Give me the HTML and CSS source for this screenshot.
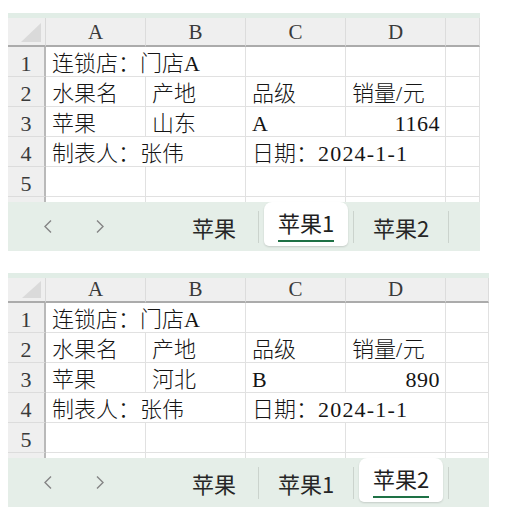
FILE: index.html
```html
<!DOCTYPE html>
<html lang="zh-CN">
<head>
<meta charset="utf-8">
<title>Sheets</title>
<link rel="stylesheet" href="styles.css">
</head>
<body>
<div class="sheet sheet-a">
  <div class="strip"></div>
  <div class="grid">
    <div class="corner"><span class="tri"></span></div>
    <div class="ch">A</div><div class="ch">B</div><div class="ch">C</div><div class="ch">D</div><div class="ch"></div>

    <div class="rh">1</div><div class="c span2">连锁店：门店<span class="lat">A</span></div><div class="c"></div><div class="c"></div><div class="c"></div>
    <div class="rh">2</div><div class="c">水果名</div><div class="c">产地</div><div class="c">品级</div><div class="c">销量<span class="lat">/</span>元</div><div class="c"></div>
    <div class="rh">3</div><div class="c">苹果</div><div class="c">山东</div><div class="c"><span class="lat">A</span></div><div class="c num"><span class="lat">1164</span></div><div class="c"></div>
    <div class="rh">4</div><div class="c span2">制表人：张伟</div><div class="c span2">日期：<span class="lat date">2024-1-1</span></div><div class="c"></div>
    <div class="rh">5</div><div class="c"></div><div class="c"></div><div class="c"></div><div class="c"></div><div class="c"></div>
    <div class="rh part"></div><div class="c part"></div><div class="c part"></div><div class="c part"></div><div class="c part"></div><div class="c part"></div>
  </div>
  <div class="tabs">
    <span class="arrow arrow-l"><svg width="10" height="13" viewBox="0 0 10 13"><polyline points="8,0.5 2,6.5 8,12.5" fill="none" stroke="#858585" stroke-width="1.4"/></svg></span>
    <span class="arrow arrow-r"><svg width="10" height="13" viewBox="0 0 10 13"><polyline points="2,0.5 8,6.5 2,12.5" fill="none" stroke="#858585" stroke-width="1.4"/></svg></span>
    <div class="tab-list">
      <div class="tab"><span class="tab-label">苹果</span></div><span class="sep"></span>
      <div class="tab tab-active"><div class="tab-card"><span class="tab-label">苹果1</span></div></div><span class="sep"></span>
      <div class="tab"><span class="tab-label">苹果2</span></div><span class="sep"></span>
    </div>
  </div>
</div>

<div class="sheet sheet-b">
  <div class="strip"></div>
  <div class="grid">
    <div class="corner"><span class="tri"></span></div>
    <div class="ch">A</div><div class="ch">B</div><div class="ch">C</div><div class="ch">D</div><div class="ch"></div>

    <div class="rh">1</div><div class="c span2">连锁店：门店<span class="lat">A</span></div><div class="c"></div><div class="c"></div><div class="c"></div>
    <div class="rh">2</div><div class="c">水果名</div><div class="c">产地</div><div class="c">品级</div><div class="c">销量<span class="lat">/</span>元</div><div class="c"></div>
    <div class="rh">3</div><div class="c">苹果</div><div class="c">河北</div><div class="c"><span class="lat">B</span></div><div class="c num"><span class="lat">890</span></div><div class="c"></div>
    <div class="rh">4</div><div class="c span2">制表人：张伟</div><div class="c span2">日期：<span class="lat date">2024-1-1</span></div><div class="c"></div>
    <div class="rh">5</div><div class="c"></div><div class="c"></div><div class="c"></div><div class="c"></div><div class="c"></div>
    <div class="rh part"></div><div class="c part"></div><div class="c part"></div><div class="c part"></div><div class="c part"></div><div class="c part"></div>
  </div>
  <div class="tabs">
    <span class="arrow arrow-l"><svg width="10" height="13" viewBox="0 0 10 13"><polyline points="8,0.5 2,6.5 8,12.5" fill="none" stroke="#858585" stroke-width="1.4"/></svg></span>
    <span class="arrow arrow-r"><svg width="10" height="13" viewBox="0 0 10 13"><polyline points="2,0.5 8,6.5 2,12.5" fill="none" stroke="#858585" stroke-width="1.4"/></svg></span>
    <div class="tab-list">
      <div class="tab"><span class="tab-label">苹果</span></div><span class="sep"></span>
      <div class="tab"><span class="tab-label">苹果1</span></div><span class="sep"></span>
      <div class="tab tab-active"><div class="tab-card"><span class="tab-label">苹果2</span></div></div><span class="sep"></span>
    </div>
  </div>
</div>
</body>
</html>
```

FILE: styles.css
```css
* { box-sizing: border-box; }
html, body { margin: 0; padding: 0; background: #ffffff; }
body { padding-top: 13px; }

.sheet {
  margin-left: 8px;
  font-family: "Liberation Serif", "Noto Sans CJK SC", serif;
  color: #111;
}
.sheet-a { width: 472px; }
.sheet-b { width: 481px; margin-top: 22px; }

.strip { height: 5px; background: #e1ede6; }

.grid {
  display: grid;
  grid-template-columns: 38px 100px 100px 100px 100px 1fr;
}
.sheet-a .grid { grid-template-rows: 29px repeat(5, 30px) 5px; }
.sheet-b .grid { grid-template-rows: 25px repeat(5, 30px) 5px; }

.corner {
  position: relative;
  background: #efefef;
  border-right: 1px solid #d9d9d9;
  border-bottom: 2px solid #ababab;
}
.tri {
  position: absolute;
  right: 4px;
  bottom: 3px;
  width: 20px;
  height: 19px;
  background: #dadada;
  clip-path: polygon(100% 0, 100% 100%, 0 100%);
}
.sheet-b .tri { width: 19px; height: 17px; }

.ch {
  background: #efefef;
  border-right: 1px solid #dcdcdc;
  border-bottom: 2px solid #ababab;
  font-size: 21px;
  color: #3a3a3a;
  text-align: center;
  line-height: 25px;
  padding-top: 2px;
}
.sheet-b .ch { line-height: 23px; padding-top: 0; }

.rh {
  background: #efefef;
  border-right: 2px solid #b9b9b9;
  border-bottom: 1px solid #dcdcdc;
  font-size: 22px;
  color: #3a3a3a;
  text-align: center;
  line-height: 27px;
  padding-top: 3px;
}

.c {
  border-right: 1px solid #e1e1e1;
  border-bottom: 1px solid #e1e1e1;
  font-size: 22px;
  line-height: 29px;
  padding: 0 6px;
  white-space: nowrap;
  font-family: "Noto Sans CJK SC", sans-serif;
  font-weight: 300;
  color: #151515;
}
.span2 { grid-column: span 2; }
.num { text-align: right; padding-right: 5px; }
.lat { font-family: "Liberation Serif", serif; font-weight: 400; letter-spacing: 0.5px; }
.date { letter-spacing: 1.2px; }

.grid .part { border-bottom: none; line-height: 0; padding: 0; }

.tabs {
  height: 49px;
  background: #e5eee8;
  display: flex;
  align-items: center;
}
.arrow { display: flex; width: 10px; height: 13px; }
.arrow-l { margin-left: 35px; }
.arrow-r { margin-left: 42px; }

.tab-list {
  display: flex;
  align-items: center;
  height: 100%;
  margin-left: 59px;
}
.tab {
  width: 94px;
  height: 100%;
  display: flex;
  align-items: center;
  justify-content: center;
  font-family: "Noto Sans CJK SC", sans-serif;
  font-size: 22px;
  color: #262626;
}
.tab:first-child { padding-left: 6px; }
.tab-label { line-height: 26px; }
.sep { width: 1px; height: 32px; background: #cbd3cd; }

.tab-active { align-items: flex-start; }
.tab-card {
  width: 84px;
  height: 44px;
  background: #ffffff;
  border-radius: 8px 8px 5px 5px;
  box-shadow: 0 1px 2px rgba(0, 0, 0, 0.14);
  display: flex;
  justify-content: center;
  padding-top: 7px;
}
.tab-card .tab-label {
  align-self: flex-start;
  padding-bottom: 5px;
  border-bottom: 2px solid #1e7145;
  color: #1f1f1f;
}
```
